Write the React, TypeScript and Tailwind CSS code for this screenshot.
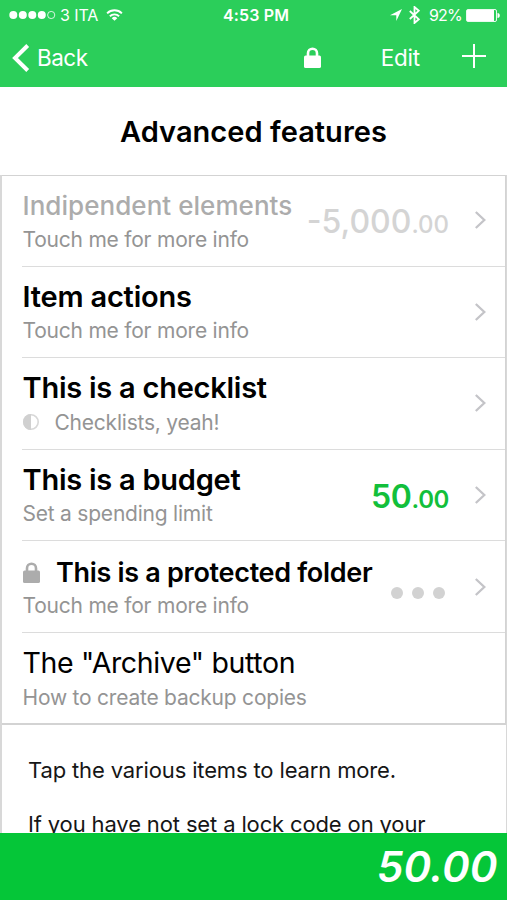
import type { ReactNode } from "react";

function Padlock({ className }: { className: string }) {
  return (
    <svg viewBox="0 0 17 21" className={className} aria-hidden="true">
      <path d="M4 10V6.200a4.500 4.500 0 0 1 9 0V10" fill="none" stroke="currentColor" strokeWidth="2.600" />
      <rect x="0" y="8.600" width="17" height="12.400" rx="1.600" fill="currentColor" />
    </svg>
  );
}

function Chevron() {
  return (
    <svg viewBox="0 0 12 20" className="h-5 w-3 shrink-0" fill="none" stroke="#c4c4c8" strokeWidth="2.300" aria-hidden="true">
      <path d="M1.800 2 10.300 10l-8.500 8" />
    </svg>
  );
}

function StatusBar() {
  return (
    <div className="flex h-[29px] items-center pt-px text-[16px] leading-none">
      <div className="flex w-[169px] items-center pl-[9px]">
        <svg viewBox="0 0 47 10" className="h-[10px] w-[47px]" fill="#fff" aria-hidden="true">
          <circle cx="4.300" cy="5" r="4" />
          <circle cx="13.800" cy="5" r="4" />
          <circle cx="23.300" cy="5" r="4" />
          <circle cx="32.800" cy="5" r="4" />
          <circle cx="42.200" cy="5" r="3.600" fill="none" stroke="#fff" strokeWidth="0.800" />
        </svg>
        <span className="ml-[4px] w-[39px] whitespace-nowrap tracking-[-0.1px]">3 ITA</span>
        <svg viewBox="0 0 18 13" className="ml-[7px] h-[12px] w-[17px]" fill="none" stroke="#fff" strokeWidth="2.100" aria-hidden="true">
          <path d="M1 4.700a11.400 11.400 0 0 1 16 0M4 7.900a7.100 7.100 0 0 1 10 0" />
          <path d="M9 12.800 6 9.900a4.300 4.300 0 0 1 6 0Z" fill="#fff" stroke="none" />
        </svg>
      </div>
      <div className="w-[174px] text-center font-semibold tracking-[0.15px]">4:53 PM</div>
      <div className="flex w-[164px] items-center justify-end pr-[7px]">
        <svg viewBox="0 0 12 12" className="h-3 w-3" fill="#fff" aria-hidden="true">
          <path d="M12 0 6.300 12V6.200H0Z" />
        </svg>
        <svg viewBox="0 0 11 18" className="ml-[7px] h-[18px] w-[11px]" fill="none" stroke="#fff" strokeWidth="1.800" aria-hidden="true">
          <path d="m.8 5 9 8.300L5.500 17V1l4.300 3.700-9 8.300" />
        </svg>
        <span className="ml-[9px] tracking-[-0.8px]">92%</span>
        <svg viewBox="0 0 34 13" className="ml-[4px] h-[13px] w-[34px]" aria-hidden="true">
          <rect x="0.500" y="0.500" width="30" height="12" rx="1.500" fill="none" stroke="#fff" strokeWidth="0.900" />
          <rect x="1" y="1" width="27" height="11" fill="#fff" />
          <path d="M31.500 4v5c3 0 3-5 0-5Z" fill="#fff" />
        </svg>
      </div>
    </div>
  );
}

function NavBar() {
  return (
    <div className="flex h-[58px] items-center pl-[12px] pr-[21px] text-[22.500px] leading-none">
      <svg viewBox="0 0 18 28" className="h-7 w-[18px]" fill="none" stroke="#fff" strokeWidth="4" aria-hidden="true">
        <path d="M15.700 1.500 3 14l12.700 12.500" />
      </svg>
      <span className="ml-[7px] w-[51px] tracking-[-0.5px]">Back</span>
      <Padlock className="ml-[216px] -mt-[1px] h-[21px] w-[17px] text-white" />
      <span className="ml-auto tracking-[-0.2px]">Edit</span>
      <svg viewBox="0 0 24 24" className="ml-[42px] -mt-[4px] h-6 w-6" fill="none" stroke="#fff" strokeWidth="2" aria-hidden="true">
        <path d="M12 0v24M0 12h24" />
      </svg>
    </div>
  );
}

type RowProps = {
  title: string;
  titleClass: string;
  subtitle: string;
  titleIcon?: ReactNode;
  subtitleIcon?: ReactNode;
  value?: ReactNode;
  chevron?: boolean;
  last?: boolean;
};

function Row({ title, titleClass, subtitle, titleIcon, subtitleIcon, value, chevron = true, last }: RowProps) {
  return (
    <li className={`flex h-[91.6px] border-b ${last ? "border-transparent" : "border-[#dcdcdc]"}`}>
      <div className="flex grow flex-col pt-[13px] pl-[0.5px] whitespace-nowrap">
        <div className="flex h-[34.600px] items-start leading-[34px]">
          {titleIcon}
          <span className={titleClass}>{title}</span>
        </div>
        <div className="flex h-[33px] items-center text-[21px] leading-[33px] tracking-[-0.22px] text-[#949494]">
          {subtitleIcon}
          <span>{subtitle}</span>
        </div>
      </div>
      {value}
      {chevron && (
        <div className="flex w-[56px] items-center pl-[24.500px]">
          <Chevron />
        </div>
      )}
    </li>
  );
}

function Amount({ whole, cents, className }: { whole: string; cents: string; className: string }) {
  return (
    <div className={`flex w-0 items-baseline justify-end leading-[42px] whitespace-nowrap ${className}`}>
      <span className="text-[32px]">{whole}</span>
      <span className="text-[24px]">{cents}</span>
    </div>
  );
}

export default function App() {
  return (
    <div className="flex h-[900px] w-[507px] flex-col overflow-hidden bg-white font-['Inter','Liberation_Sans',sans-serif] text-black">
      <header className="h-[87px] shrink-0 bg-[#2bce5a] text-white">
        <StatusBar />
        <NavBar />
      </header>
      <h1 className="h-[88px] shrink-0 pt-[1px] text-center text-[29px] leading-[87px] font-semibold tracking-[0.05px]">
        Advanced features
      </h1>
      <main className="min-h-0 grow overflow-hidden border-r border-l-2 border-[#d8d8d8]">
        <div className="h-[550px] border-t border-r border-b-2 border-[#d3d3d3]">
          <ul className="-mt-px ml-[20px]">
            <Row
              title="Indipendent elements"
              titleClass="pt-px text-[26px] font-medium tracking-[0.05px] text-[#acacac]"
              subtitle="Touch me for more info"
              value={<Amount whole="-5,000" cents=".00" className="pt-[26px] font-medium text-[#d4d4d4]" />}
            />
            <Row
              title="Item actions"
              titleClass="text-[29px] font-semibold tracking-[-0.2px]"
              subtitle="Touch me for more info"
            />
            <Row
              title="This is a checklist"
              titleClass="text-[29px] font-semibold tracking-[-0.25px]"
              subtitle="Checklists, yeah!"
              subtitleIcon={
                <svg viewBox="0 0 16 16" className="mr-[16px] h-4 w-4" aria-hidden="true">
                  <circle cx="8" cy="8" r="7.200" fill="none" stroke="#d8d8d8" strokeWidth="1.600" />
                  <path d="M8 0a8 8 0 0 0 0 16Z" fill="#d0d0d0" />
                </svg>
              }
            />
            <Row
              title="This is a budget"
              titleClass="text-[29px] font-semibold tracking-[-0.25px]"
              subtitle="Set a spending limit"
              value={<Amount whole="50" cents=".00" className="pt-[26px] font-semibold tracking-[-0.4px] text-[#12bf3b]" />}
            />
            <Row
              title="This is a protected folder"
              titleClass="pt-[1.500px] text-[27px] font-semibold tracking-[-0.3px]"
              titleIcon={<Padlock className="mt-[8px] mr-[16.500px] h-[21px] w-[17px] text-[#acacac]" />}
              subtitle="Touch me for more info"
              value={
                <div className="flex w-0 items-center justify-end gap-[9px] pt-[13px] pr-[4px]">
                  <span className="size-[12px] shrink-0 rounded-full bg-[#d2d2d2]" />
                  <span className="size-[12px] shrink-0 rounded-full bg-[#d2d2d2]" />
                  <span className="size-[12px] shrink-0 rounded-full bg-[#d2d2d2]" />
                </div>
              }
            />
            <Row
              title={'The "Archive" button'}
              titleClass="text-[28.500px] tracking-[-0.35px]"
              subtitle="How to create backup copies"
              chevron={false}
              last
            />
          </ul>
        </div>
        <div className="pt-[29px] pl-[26px] text-[22px] leading-[32px] tracking-[-0.14px] whitespace-nowrap text-[#161616]">
          <p>Tap the various items to learn more.</p>
          <p className="mt-[22px]">If you have not set a lock code on your</p>
        </div>
      </main>
      <footer className="flex h-[67px] shrink-0 items-center justify-end bg-[#05c638] pr-[9.500px] text-[42px] leading-none font-semibold text-white italic">
        50.00
      </footer>
    </div>
  );
}
